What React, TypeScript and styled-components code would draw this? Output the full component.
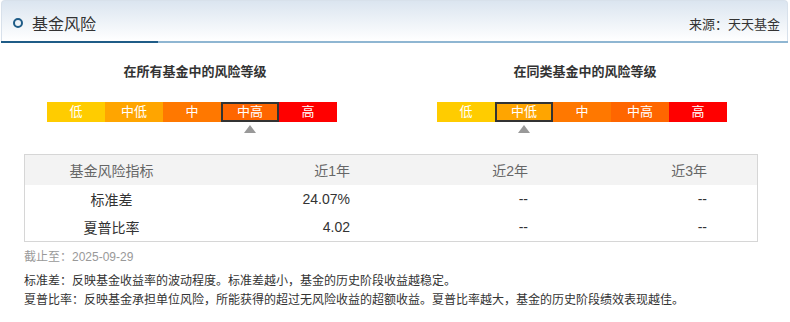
import React from 'react'
import styled, { createGlobalStyle } from 'styled-components'

const GlobalStyle = createGlobalStyle`
  body {
    margin: 0;
    background: #fff;
    font-family: "Liberation Sans", "Noto Sans CJK SC", sans-serif;
    color: #333;
  }
`

const Page = styled.div`
  width: 790px;
`

const Header = styled.div`
  margin: 0 2px 0 1px;
  height: 41px;
  box-sizing: border-box;
  display: flex;
  align-items: center;
  justify-content: space-between;
  padding: 0 7px 0 11px;
  border: 1px solid #d8e1eb;
  border-bottom: none;
  border-radius: 4px 4px 0 0;
  background: linear-gradient(to bottom, #dbe5f0, #ffffff);
`

const HeaderRule = styled.div`
  margin: 0 2px 0 1px;
  height: 2px;
  background: linear-gradient(to right, #1f5c87 157px, #8fb6d2 157px);
`

const TitleWrap = styled.div`
  display: flex;
  align-items: center;
  gap: 9px;
  padding-top: 4px;
`

const Ring = styled.span`
  width: 10px;
  height: 10px;
  box-sizing: border-box;
  border: 2.5px solid #1f5c87;
  border-radius: 50%;
`

const Title = styled.span`
  font-size: 16px;
  color: #333;
`

const Source = styled.span`
  font-size: 13px;
  color: #333;
  padding-top: 4px;
`

const Ratings = styled.div`
  display: grid;
  grid-template-columns: 390px 390px;
  padding-top: 19px;
`

const RatingBlock = styled.div`
  display: flex;
  flex-direction: column;
`

const RatingTitle = styled.div`
  text-align: center;
  font-size: 13px;
  font-weight: bold;
  line-height: 20px;
  color: #333;
`

const Scale = styled.div`
  display: flex;
  margin: 20px 0 0 47px;
`

const Level = styled.div`
  display: flex;
  flex-direction: column;
  align-items: center;
  width: 58px;
`

const LevelCell = styled.div<{ $bg: string; $active: boolean }>`
  width: 58px;
  height: 20px;
  box-sizing: border-box;
  background: ${p => p.$bg};
  box-shadow: ${p => (p.$active ? 'inset 0 0 0 2px #333' : 'none')};
  color: #fff;
  font-size: 13px;
  line-height: 20px;
  text-align: center;
`

const Marker = styled.div<{ $show: boolean }>`
  margin-top: 3px;
  width: 0;
  height: 0;
  border-left: 6px solid transparent;
  border-right: 6px solid transparent;
  border-bottom: 8px solid ${p => (p.$show ? '#999' : 'transparent')};
`

const Table = styled.div`
  margin: 21px 0 0 24px;
  width: 734px;
  box-sizing: border-box;
  border: 1px solid #d6d6d6;
`

const Row = styled.div<{ $head?: boolean }>`
  display: grid;
  grid-template-columns: 173px 180px 178px 1fr;
  height: ${p => (p.$head ? '30px' : '28px')};
  align-items: center;
  background: ${p => (p.$head ? '#f3f3f3' : '#fff')};
  color: ${p => (p.$head ? '#666' : '#333')};
  font-size: 14px;
`

const Cell = styled.div`
  text-align: right;
  padding-right: 28px;

  &:first-child {
    text-align: center;
    padding-right: 0;
  }

  &:last-child {
    padding-right: 50px;
  }
`

const DateLine = styled.div`
  margin: 6px 0 0 24px;
  font-size: 12px;
  line-height: 18px;
  color: #999;
`

const Notes = styled.div`
  margin: 6px 0 0 24px;
  font-size: 12px;
  line-height: 19px;
  color: #333;
`

const levels = [
  { name: '低', bg: '#ffcc00' },
  { name: '中低', bg: '#ffa500' },
  { name: '中', bg: '#ff7800' },
  { name: '中高', bg: '#ff6600' },
  { name: '高', bg: '#ff0000' },
]

const ratings = [
  { title: '在所有基金中的风险等级', active: 3 },
  { title: '在同类基金中的风险等级', active: 1 },
]

const rows = [
  ['标准差', '24.07%', '--', '--'],
  ['夏普比率', '4.02', '--', '--'],
]

export default function App() {
  return (
    <Page>
      <GlobalStyle />
      <Header>
        <TitleWrap>
          <Ring />
          <Title>基金风险</Title>
        </TitleWrap>
        <Source>来源：天天基金</Source>
      </Header>
      <HeaderRule />
      <Ratings>
        {ratings.map(r => (
          <RatingBlock key={r.title}>
            <RatingTitle>{r.title}</RatingTitle>
            <Scale>
              {levels.map((l, i) => (
                <Level key={l.name}>
                  <LevelCell $bg={l.bg} $active={i === r.active}>{l.name}</LevelCell>
                  <Marker $show={i === r.active} />
                </Level>
              ))}
            </Scale>
          </RatingBlock>
        ))}
      </Ratings>
      <Table>
        <Row $head>
          <Cell>基金风险指标</Cell>
          <Cell>近1年</Cell>
          <Cell>近2年</Cell>
          <Cell>近3年</Cell>
        </Row>
        {rows.map(r => (
          <Row key={r[0]}>
            {r.map((v, i) => (
              <Cell key={i}>{v}</Cell>
            ))}
          </Row>
        ))}
      </Table>
      <DateLine>截止至：2025-09-29</DateLine>
      <Notes>
        <div>标准差：反映基金收益率的波动程度。标准差越小，基金的历史阶段收益越稳定。</div>
        <div>夏普比率：反映基金承担单位风险，所能获得的超过无风险收益的超额收益。夏普比率越大，基金的历史阶段绩效表现越佳。</div>
      </Notes>
    </Page>
  )
}
